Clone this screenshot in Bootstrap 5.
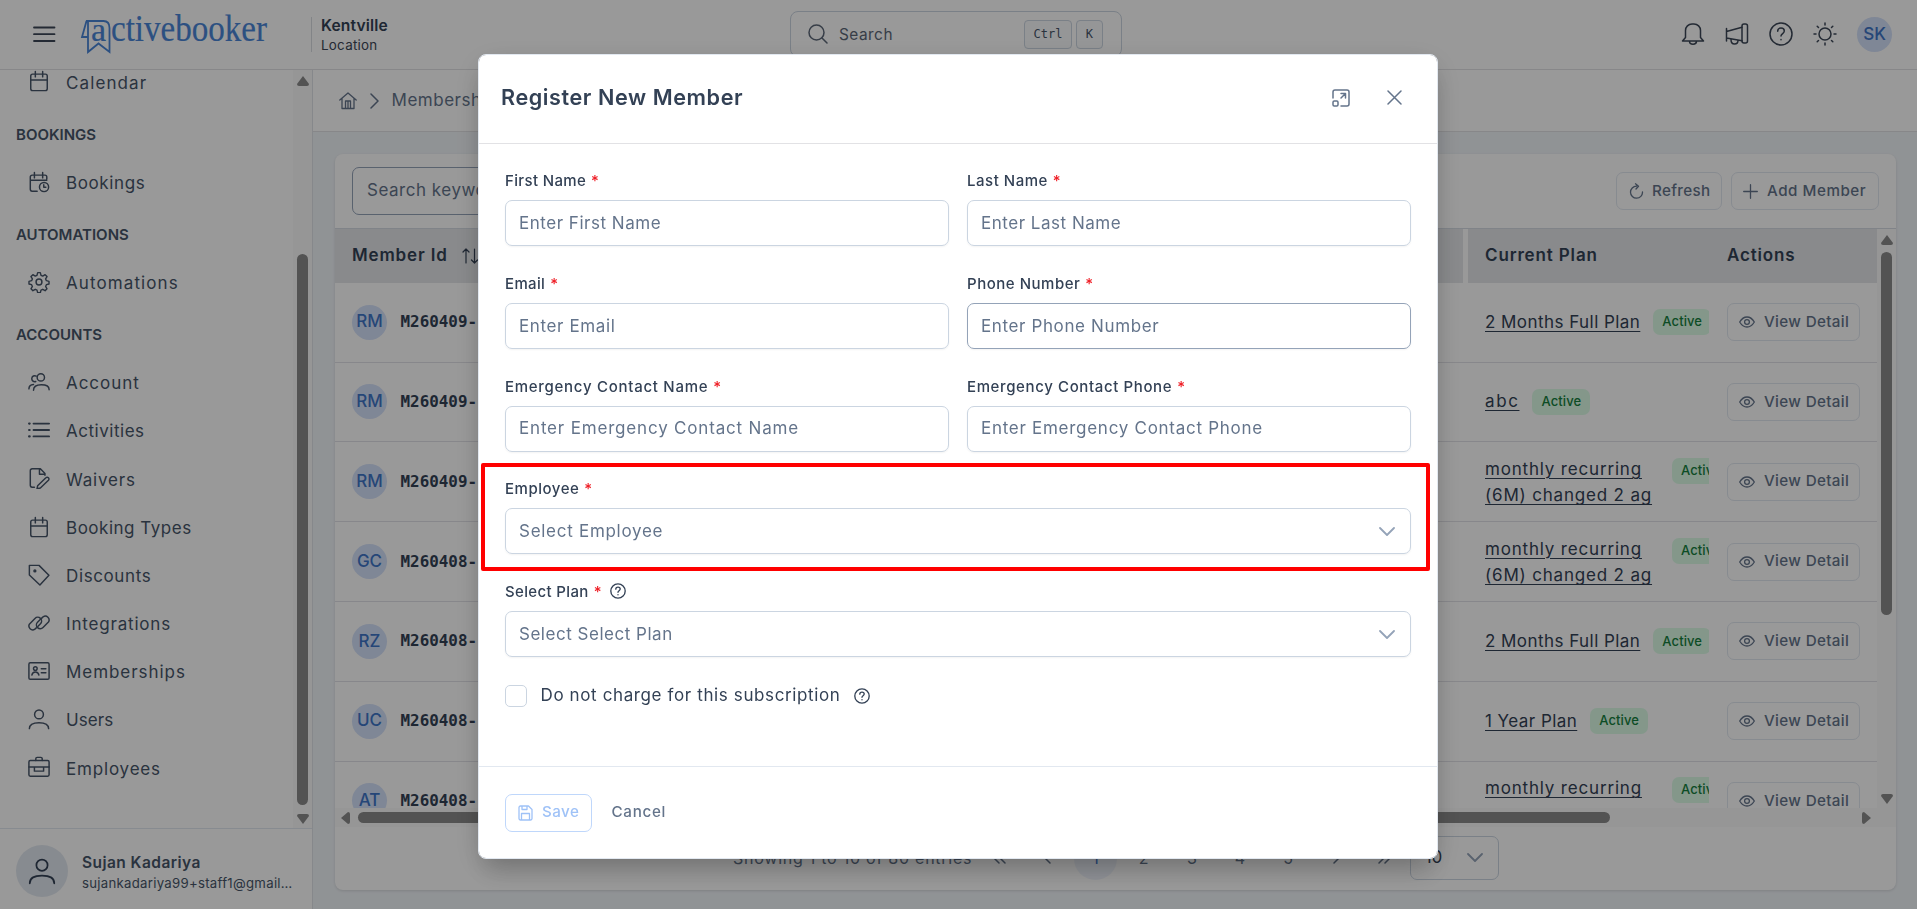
<!DOCTYPE html>
<html lang="en">
<head>
<meta charset="utf-8">
<meta name="viewport" content="width=device-width, initial-scale=1">
<title>Members</title>
<link href="https://cdn.jsdelivr.net/npm/bootstrap@5.3.0/dist/css/bootstrap.min.css" rel="stylesheet">
<style>
body{font-family:Inter,"Noto Sans",sans-serif;font-size:17px;color:#475569;background:#f1f5f9;height:909px;overflow:hidden;line-height:1.5;--bs-border-color:#e2e8f0}
svg.ic{fill:none;stroke:currentColor;stroke-width:1.5;stroke-linecap:round;stroke-linejoin:round;flex:none;display:block}
.ls1{letter-spacing:.1px!important}.ls3{letter-spacing:.35px!important}.ls5{letter-spacing:.52px!important}.ls6{letter-spacing:.62px!important}.ls7{letter-spacing:.72px!important}.ls8{letter-spacing:.82px!important}.ls9{letter-spacing:.95px!important}.ls11{letter-spacing:1.1px!important}.ls15{letter-spacing:1.6px!important}
.app{height:909px}
.top-bar{height:70px;border-bottom:1px solid #e2e2e5;background:#fff;padding:0 25px 0 33px;color:#3c4757}
.brand{margin-left:25px;overflow:visible}
.loc{margin-left:44px;border-left:1px solid #d9dde2;height:35px;padding-left:9px;line-height:1}
.loc b{font-size:15.6px;font-weight:600;color:#334155;letter-spacing:.15px;margin-top:1px;display:block}
.loc span{font-size:13.4px;letter-spacing:.25px;display:block;margin-top:5px}
.quick{width:332px;height:46px;border:1px solid #cbd5e1;border-radius:8px;margin-left:402px;margin-top:-1px;padding:0 18px 0 17px;font-size:15.4px;color:#5d6878}
.quick-text{margin-left:11px;letter-spacing:.5px;padding-top:1px}
.key{font-family:"DejaVu Sans Mono",monospace;font-size:12px;border:1px solid #cbd5e1;border-radius:4px;background:#f8fafc;height:29px;display:flex;align-items:center;justify-content:center;color:#475569}
.key.wide{width:48px}.key.slim{width:27px}
.top-icons{gap:20px;margin-top:-2px}
.round-av{width:35px;height:35px;border-radius:50%;background:#d4e1fa;color:#3f76c8;font-weight:500;font-size:17px;display:flex;align-items:center;justify-content:center;flex:none}
.top-icons .round-av{margin-top:2px}
.side{width:313px;border-right:1px solid #dfe3e8;background:#fff}
.side-scroll{height:758px;overflow:hidden}
.menu-list{margin-top:-10.8px;width:293px;flex:none}
.menu-item{height:48.17px;padding-left:28px;font-size:17px;color:#475569}
.menu-item .ic{width:22px;height:22px;margin-right:16px;margin-top:-4px;color:#475569;stroke-width:1.6}
.menu-head{height:52.1px;padding:3px 0 0 16px;font-size:15px;font-weight:600;color:#475569}
.vbar{width:19px;background:#fbfbfb;padding:6px 0 4px}
.vbar i,.hbar i{background:#8a8a8a;border-radius:6px;display:block}
.vbar i{width:11px}
.side .vbar i{height:551px;margin-top:168px}
.grid-box .vbar i{height:363px;margin-top:7px}
.tri{fill:#8a8a8a;flex:none;display:block}
.who{height:81px;border-top:1px solid #e2e8f0;padding:4px 0 0 16px}
.who .pic{width:52px;height:52px;border-radius:50%;background:#e2e8f0;color:#334155}
.who-text{margin-left:14px;padding-top:4px}
.who b{font-size:15.5px;font-weight:600;line-height:20px;display:block;color:#475569;letter-spacing:.45px}
.who span{font-size:13.2px;line-height:20px;display:block;color:#475569}
.who-text span{letter-spacing:.28px}
.crumbs{height:62px;border-bottom:1px solid #e2e2e5;background:#fff;padding-left:26px;color:#64748b;font-size:17px}
.crumbs .sep{margin:0 12.500px 0 13px}
.panel{margin:22px 21px 0 22px;height:736px;border-radius:8px;background:#fff;box-shadow:0 1px 3px rgba(0,0,0,.12)}
.tools{height:74px;padding:0 17px}
.kw{width:300px;height:48px;border:1px solid #94a3b8;border-radius:7px;padding-left:14px;font-size:17px;color:#64748b}
.ghost{height:38px;border:1px solid #e2e8f0;border-radius:7px;color:#64748b;font-size:15.2px;font-weight:500;display:flex;align-items:center;padding:0 0 0 11px;background:#fff}
.ghost .ic{margin-right:9px;stroke-width:1.3}
.b-refresh{width:106px;margin-right:9px}.b-add{width:148px}.b-view{width:133px}
.b-refresh .ic{margin-left:1px;margin-right:8px}
.grid-box{height:580px;border-top:1px solid #d5dbe3}
.rows-area{height:579px;overflow:hidden}
.line{display:flex;height:79.8px;border-bottom:1px solid #e2e2e8}
.line.hd{height:53.8px;border:0;font-weight:600;font-size:17px;color:#334155;letter-spacing:.85px}
.hd>div{background:#e4e6e9}
.line .c1{width:1133px;flex:none;padding-left:17px}
.line .c2{width:241px;flex:none;padding-left:17px;overflow:hidden}
.line .c3{width:168px;flex:none;padding-left:18px}
.hd .c1{border-right:5px solid #fff}
.hd .sort{margin-left:14px;stroke-width:1.2}
.mid{font-family:"DejaVu Sans Mono",monospace;font-weight:700;font-size:15.9px;color:#334155;margin-left:13.500px}
.plan{color:#334155;text-decoration:underline;text-underline-offset:3px;text-decoration-thickness:1px;line-height:27px;letter-spacing:.45px;white-space:nowrap}
.plan.two{width:187px;flex:none;line-height:26.5px;letter-spacing:.82px}
.pt-two{padding-top:13.500px}
.state{background:#dcfce7;color:#15803d;font-weight:500;font-size:13px;height:26px;border-radius:7px;padding:0 9px;display:flex;align-items:center;margin-left:13px;flex:none;letter-spacing:.1px}
.two+.state{margin-left:0;margin-top:2px}
.hbar{height:19px;background:#fbfbfb;padding:0 6px}
.hbar i{height:11px;width:1252px;margin-left:8px}
.hbar .end{margin-right:19px}
.pages{font-size:16px;height:62px;color:#64748b}
.showing{margin-left:398px;width:242px;letter-spacing:.75px}
.pg{width:48.2px;display:flex;justify-content:center;align-items:center}
.pg.on span{width:43px;height:43px;border-radius:50%;background:#eff3fb;color:#3f76c8;display:flex;align-items:center;justify-content:center}
.count-sel{width:89px;height:44px;border:1px solid #cbd5e1;border-radius:7px;color:#334155;padding:0 15px 0 14px;font-size:17px;margin-left:1px}
.arrow{color:#94a3b8}
.shade{position:fixed;inset:0;background:rgba(0,0,0,.4)}
.modal{padding-right:1px}
.modal-dialog{width:960px;max-width:960px;margin:54px auto 0}
.modal-content{height:805px;border:1px solid #e2e8f0;border-radius:8px;box-shadow:0 20px 25px -5px rgba(0,0,0,.1),0 8px 30px -6px rgba(0,0,0,.25);color:#475569}
.modal-header{height:89px;border-bottom:1px solid #e2e2e5;padding:0 35px 3px 22px;color:#64748b}
.modal-header .d-flex{gap:37px}
.modal-title{font-size:21.6px;font-weight:600;color:#334155;letter-spacing:.58px;line-height:1.1}
.modal-body{padding:24px 26px 0}
.cell{height:102.8px}
.cell label{height:25px;font-size:15px;font-weight:500;color:#334155;display:flex;align-items:center;margin-bottom:7px;line-height:25px}
.cell label em{color:#ef1c24;font-style:normal;margin-left:5px;letter-spacing:0}
.cell label .ic{margin-left:9px;margin-top:-1px}
.inp{height:46px;border:1px solid #cbd5e1;border-radius:7px;padding:1px 15px 0 13px;display:flex;align-items:center;justify-content:space-between;color:#64748b;font-size:17px;box-shadow:0 1px 2px rgba(18,18,23,.05)}
.inp.hov{border-color:#94a3b8}
.g18{--bs-gutter-x:18px}
.hilite{position:absolute;left:2px;top:408px;width:948.500px;height:107.500px;border:4px solid #f00;border-radius:2px}
.nocharge{margin-top:1px;color:#334155;gap:13.500px}
.tick{width:22px;height:22px;border:1px solid #cbd5e1;border-radius:5px}
.modal-footer{height:92px;border-top:1px solid #e2e8f0;padding:0 26px;justify-content:flex-start}
.modal-footer>*{margin:0}
.save{width:86.500px;border-color:#bfd7fb;color:#9fc2f7;letter-spacing:.45px}
.save .ic{margin-left:1px}
.cancel{margin-left:20px;font-size:15.2px;font-weight:500;color:#64748b;letter-spacing:.7px}
</style>
</head>
<body>
<svg width="0" height="0" class="position-absolute">
<defs>
<symbol id="cal" viewBox="0 0 24 24"><rect x="3" y="4.5" width="18" height="18" rx="2"/><path d="M3 11h18M8 1.5v6M16 1.5v6"/></symbol>
<symbol id="calclock" viewBox="0 0 24 24"><path d="M10 22H4.500a2 2 0 0 1-2-2V6.500a2 2 0 0 1 2-2h14a2 2 0 0 1 2 2V9M2.500 10h18M7 1.500v6M16 1.500v6"/><circle cx="17.500" cy="17.500" r="5"/><path d="M17.200 15v2.800h2.300"/></symbol>
<symbol id="gear" viewBox="0 0 24 24"><circle cx="12" cy="12" r="3.200"/><path d="M10.500 1.500h3l.8 3 2 .9 2.700-1.600 2.200 2.200-1.600 2.700.9 2 3 .8v3l-3 .8-.9 2 1.600 2.700-2.200 2.200-2.700-1.600-2 .9-.8 3h-3l-.8-3-2-.9L5 22.200 2.800 20l1.600-2.700-.9-2-3-.8v-3l3-.8.9-2L2.800 6 5 3.800l2.700 1.600 2-.9z" transform="translate(.6 .4) scale(.95)"/></symbol>
<symbol id="group" viewBox="0 0 24 24"><circle cx="14" cy="7" r="4"/><path d="M6 21c0-4 3-6 8.500-6s8.500 2 8.500 5v.5M9 5.500A3.300 3.300 0 1 0 8.500 11.500M1 19.500c0-3 1.500-4.500 5-4.800"/></symbol>
<symbol id="list" viewBox="0 0 24 24"><path d="M6 5h17M6 12h17M6 19h17" stroke-width="2"/><path d="M1.200 5h.6M1.200 12h.6M1.200 19h.6" stroke-width="2.400"/></symbol>
<symbol id="waiver" viewBox="0 0 24 24"><path d="M7 22H4.500a2 2 0 0 1-2-2V4a2 2 0 0 1 2-2h9L18.500 7v2M12.500 2.500v5.500h6"/><path d="M10.500 20.500 19.500 11.800a1.900 1.900 0 0 1 2.800 2.700L13.500 23l-3.700.8z"/></symbol>
<symbol id="tag" viewBox="0 0 24 24"><path d="M1.500 1.500h10.500L22.800 12.300 13 23 1.500 12z"/><circle cx="7.500" cy="7.500" r="1"/></symbol>
<symbol id="chain" viewBox="0 0 24 24"><path d="M9 17.300 7.500 18.800A4.200 4.200 0 0 1 1.700 13L7.600 7a4.200 4.200 0 0 1 6 5.900l-2.400 2.500M15 6.700 16.500 5.200A4.200 4.200 0 0 1 22.300 11L16.400 17a4.200 4.200 0 0 1-6-5.900l2.400-2.500"/></symbol>
<symbol id="idc" viewBox="0 0 24 24"><rect x="1" y="3" width="22" height="18" rx="1.500"/><circle cx="8" cy="9.300" r="2"/><path d="M4.200 16.500c.4-2.500 1.600-3.500 3.800-3.500s3.500 1 3.900 3.500M14.500 9.500h5M14.500 14h5"/></symbol>
<symbol id="usr" viewBox="0 0 24 24"><circle cx="12" cy="7" r="4.800"/><path d="M1.500 22.500c0-4.500 4-6.500 10.500-6.500s10.500 2 10.500 6.500"/></symbol>
<symbol id="case" viewBox="0 0 24 24"><rect x="1" y="5" width="22" height="17" rx="1.500"/><path d="M8.500 5V3a1.500 1.500 0 0 1 1.500-1.500h4A1.500 1.500 0 0 1 15.500 3v2M1 12h22M7 12v4.500h10V12"/></symbol>
<symbol id="q" viewBox="0 0 24 24"><circle cx="12" cy="12" r="11"/><path d="M8.700 9.300c0-2 1.400-3.200 3.300-3.200s3.300 1.200 3.300 3c0 2.400-3.300 2.500-3.300 4.900M12 17.400v.3"/></symbol>
<symbol id="q2" viewBox="0 0 24 24" stroke-width="2"><circle cx="12" cy="12" r="10.800"/><path d="M8.700 9.300c0-2 1.400-3.200 3.300-3.200s3.300 1.200 3.300 3c0 2.400-3.300 2.500-3.300 4.900M12 17.400v.3"/></symbol>
<symbol id="dn" viewBox="0 0 16 10"><path d="M1 1l7 7 7-7" stroke-width="1.800"/></symbol>
<symbol id="eye" viewBox="0 0 24 18" stroke-width="1.900"><path d="M1 9c3-5 6.500-7.500 11-7.500S20 4 23 9c-3 5-6.500 7.500-11 7.500S4 14 1 9z"/><circle cx="12" cy="9" r="3.600"/></symbol>
</defs></svg>

<div class="app d-flex flex-column">
<header class="top-bar d-flex align-items-center">
  <svg class="ic" width="23" height="18" viewBox="0 0 23 18"><path stroke-width="1.800" d="M1 1.500h20.500M1 8.200h20.500M1 15h20.500"/></svg>
  <svg class="brand" width="186" height="46" viewBox="0 0 186 46">
    <path d="M5 9h17.500q6 0 6 7v24l-11-8.500L7 40V9M5.500 9 1 25h5.500" fill="none" stroke="#4a86d8" stroke-width="1.800"/>
    <g fill="#4a86d8" stroke="#4a86d8" stroke-width=".2" font-family="Liberation Serif, serif"><text x="10" y="29" font-size="34">a</text><text x="30" y="29" font-size="37" textLength="156" lengthAdjust="spacingAndGlyphs">ctivebooker</text></g>
  </svg>
  <div class="loc"><b>Kentville</b><span>Location</span></div>
  <div class="quick d-flex align-items-center">
    <svg class="ic" width="20" height="20" viewBox="0 0 20 20"><circle cx="8.500" cy="8.500" r="7.500"/><path d="M14 14l5 5"/></svg>
    <span class="quick-text me-auto">Search</span>
    <span class="key wide">Ctrl</span><span class="key slim ms-1">K</span>
  </div>
  <div class="top-icons d-flex align-items-center ms-auto">
    <svg class="ic" width="24" height="24" viewBox="0 0 24 24"><path d="M1.500 19h21l-3-3.500V8.500A6.500 6.500 0 0 0 13 2h-2a6.500 6.500 0 0 0-6.500 6.500v7zM8.500 19.300a3.500 3 0 0 0 7 0"/></svg>
    <svg class="ic" width="24" height="24" viewBox="0 0 24 24"><rect x="17" y="2" width="5.500" height="19" rx="2"/><path d="M17 5.200 1.500 9.500v6.500L17 18.800M1.500 6.500v12.500M6 17.500c0 3.300 1.500 4.500 3.500 4.500s3.500-1.300 3.500-3.500"/></svg>
    <svg class="ic" width="24" height="24"><use href="#q"/></svg>
    <svg class="ic" width="24" height="24" viewBox="0 0 24 24"><circle cx="12" cy="12" r="6"/><path d="M12 1v2M12 21v2M1 12h2M21 12h2M4.200 4.200l1.300 1.300M18.500 18.500l1.300 1.300M4.200 19.800l1.300-1.300M18.500 5.500l1.300-1.300"/></svg>
    <span class="round-av">SK</span>
  </div>
</header>
<div class="d-flex flex-grow-1">
<aside class="side flex-shrink-0">
  <div class="side-scroll d-flex">
    <nav class="menu-list">
      <div class="menu-item ls11 d-flex align-items-center"><svg class="ic"><use href="#cal"/></svg>Calendar</div>
      <div class="menu-head d-flex align-items-center">BOOKINGS</div>
      <div class="menu-item ls6 d-flex align-items-center"><svg class="ic"><use href="#calclock"/></svg>Bookings</div>
      <div class="menu-head d-flex align-items-center">AUTOMATIONS</div>
      <div class="menu-item ls11 d-flex align-items-center"><svg class="ic"><use href="#gear"/></svg>Automations</div>
      <div class="menu-head d-flex align-items-center">ACCOUNTS</div>
      <div class="menu-item ls9 d-flex align-items-center"><svg class="ic"><use href="#group"/></svg>Account</div>
      <div class="menu-item ls5 d-flex align-items-center"><svg class="ic"><use href="#list"/></svg>Activities</div>
      <div class="menu-item ls8 d-flex align-items-center"><svg class="ic"><use href="#waiver"/></svg>Waivers</div>
      <div class="menu-item ls5 d-flex align-items-center"><svg class="ic"><use href="#cal"/></svg>Booking Types</div>
      <div class="menu-item ls6 d-flex align-items-center"><svg class="ic"><use href="#tag"/></svg>Discounts</div>
      <div class="menu-item ls8 d-flex align-items-center"><svg class="ic"><use href="#chain"/></svg>Integrations</div>
      <div class="menu-item ls9 d-flex align-items-center"><svg class="ic"><use href="#idc"/></svg>Memberships</div>
      <div class="menu-item ls1 d-flex align-items-center"><svg class="ic"><use href="#usr"/></svg>Users</div>
      <div class="menu-item ls8 d-flex align-items-center"><svg class="ic"><use href="#case"/></svg>Employees</div>
    </nav>
    <div class="vbar d-flex flex-column align-items-center">
      <svg class="tri" width="12" height="10"><path d="M6 0 12 8q0 2-2 2H2Q0 10 0 8z"/></svg>
      <i></i>
      <svg class="tri mt-auto" width="12" height="10"><path d="M6 10 12 2q0-2-2-2H2Q0 0 0 2z"/></svg>
    </div>
  </div>
  <div class="who d-flex align-items-center"><span class="pic d-flex align-items-center justify-content-center"><svg class="ic" width="28" height="28"><use href="#usr"/></svg></span><div class="who-text"><b>Sujan Kadariya</b><span>sujankadariya99+staff1@gmail…</span></div></div>
</aside>
<main class="flex-grow-1">
  <div class="crumbs ls5 d-flex align-items-center">
    <svg class="ic" width="18" height="18" viewBox="0 0 18 18"><path stroke-width="1.300" d="M.8 8 9 1l8.200 7M3 6.500V16.500h12V6.500M6.500 16.500V9h5v7.500M9 9v7.500"/></svg>
    <svg class="ic sep" width="9" height="16" viewBox="0 0 9 16"><path d="M1 1l7 7-7 7"/></svg>Memberships
  </div>
  <section class="panel">
    <div class="tools d-flex align-items-center">
      <div class="kw ls5 d-flex align-items-center">Search keyword</div>
      <div class="ghost b-refresh ls3 ms-auto"><svg class="ic" width="15" height="16" viewBox="0 0 15 16"><path d="M7.500 3.200A6 6 0 1 0 13.500 9M6.500.8 9.500 3.200 7 6"/></svg>Refresh</div>
      <div class="ghost b-add ls5"><svg class="ic" width="15" height="15" viewBox="0 0 15 15"><path d="M7.500.7v13.600M.7 7.500h13.600"/></svg>Add Member</div>
    </div>
    <div class="grid-box d-flex">
      <div class="rows-area">
        <div class="line hd"><div class="c1 d-flex align-items-center">Member Id<svg class="ic sort" width="17" height="16" viewBox="0 0 17 16"><path d="M4 15V1M1 4l3-3 3 3M12.500 1v14M9.500 12l3 3 3-3"/></svg></div><div class="c2 d-flex align-items-center">Current Plan</div><div class="c3 d-flex align-items-center">Actions</div></div>
        <div id="rows"></div>
      </div>
      <div class="vbar d-flex flex-column align-items-center">
        <svg class="tri" width="12" height="10"><path d="M6 0 12 8q0 2-2 2H2Q0 10 0 8z"/></svg>
        <i></i>
        <svg class="tri mt-auto" width="12" height="10"><path d="M6 10 12 2q0-2-2-2H2Q0 0 0 2z"/></svg>
      </div>
    </div>
    <div class="hbar d-flex align-items-center">
      <svg class="tri" width="9" height="12"><path d="M0 6 7 0q2 0 2 2v8q0 2-2 2z"/></svg><i></i>
      <svg class="tri end ms-auto" width="9" height="12"><path d="M9 6 2 0Q0 0 0 2v8q0 2 2 2z"/></svg>
    </div>
    <div class="pages d-flex align-items-center">
      <span class="showing text-nowrap">Showing 1 to 10 of 80 entries</span>
      <span class="pg"><svg class="ic" width="13" height="12" viewBox="0 0 13 12"><path d="M6 1 1 6l5 5M12 1 7 6l5 5"/></svg></span>
      <span class="pg"><svg class="ic" width="7" height="12" viewBox="0 0 7 12"><path d="M6 1 1 6l5 5"/></svg></span>
      <span class="pg on"><span>1</span></span><span class="pg">2</span><span class="pg">3</span><span class="pg">4</span><span class="pg">5</span>
      <span class="pg"><svg class="ic" width="7" height="12" viewBox="0 0 7 12"><path d="M1 1l5 5-5 5"/></svg></span>
      <span class="pg"><svg class="ic" width="13" height="12" viewBox="0 0 13 12"><path d="M1 1l5 5-5 5M7 1l5 5-5 5"/></svg></span>
      <div class="count-sel d-flex align-items-center justify-content-between">10<svg class="ic arrow" width="16" height="10"><use href="#dn"/></svg></div>
    </div>
  </section>
</main>
</div>
</div>

<div class="shade"></div>
<div class="modal d-block"><div class="modal-dialog"><div class="modal-content">
  <div class="modal-header d-flex align-items-center">
    <h5 class="modal-title">Register New Member</h5>
    <div class="d-flex align-items-center">
      <svg class="ic" width="18" height="18" viewBox="0 0 18 18"><path d="M1 9V3a2 2 0 0 1 2-2h12a2 2 0 0 1 2 2v12a2 2 0 0 1-2 2H9M9 9l4.500-4.500M9 4.500h4.500V9"/><rect x="1" y="12" width="5" height="5" rx="1.200"/></svg>
      <svg class="ic" width="15" height="15" viewBox="0 0 15 15"><path d="M1 1l13 13M14 1 1 14"/></svg>
    </div>
  </div>
  <div class="modal-body">
    <div class="row g18">
      <div class="col-6 cell"><label class="ls3">First Name <em>*</em></label><div class="inp ls5">Enter First Name</div></div>
      <div class="col-6 cell"><label class="ls5">Last Name <em>*</em></label><div class="inp ls5">Enter Last Name</div></div>
      <div class="col-6 cell"><label class="ls3">Email <em>*</em></label><div class="inp ls6">Enter Email</div></div>
      <div class="col-6 cell"><label class="ls5">Phone Number <em>*</em></label><div class="inp hov ls6">Enter Phone Number</div></div>
      <div class="col-6 cell"><label class="ls7">Emergency Contact Name <em>*</em></label><div class="inp ls8">Enter Emergency Contact Name</div></div>
      <div class="col-6 cell"><label class="ls6">Emergency Contact Phone <em>*</em></label><div class="inp ls7">Enter Emergency Contact Phone</div></div>
      <div class="col-12 cell"><label class="ls5">Employee <em>*</em></label><div class="inp ls7">Select Employee<svg class="ic arrow" width="16" height="10"><use href="#dn"/></svg></div></div>
      <div class="col-12 cell"><label class="ls3">Select Plan <em>*</em><svg class="ic" width="16" height="16"><use href="#q2"/></svg></label><div class="inp ls5">Select Select Plan<svg class="ic arrow" width="16" height="10"><use href="#dn"/></svg></div></div>
    </div>
    <div class="nocharge d-flex align-items-center"><span class="tick"></span><span class="ls6">Do not charge for this subscription</span><svg class="ic" width="16" height="16"><use href="#q2"/></svg></div>
  </div>
  <div class="modal-footer d-flex mt-auto"><span class="ghost save"><svg class="ic" width="15" height="16" viewBox="0 0 15 16"><path d="M2.500 1h8L14 4.500v9a1.500 1.500 0 0 1-1.500 1.500h-10A1.500 1.500 0 0 1 1 13.500v-11A1.500 1.500 0 0 1 2.500 1zM4 1v3.500h5V1M3.500 15V8.500h8V15"/></svg>Save</span><span class="cancel">Cancel</span></div>
  <div class="hilite"></div>
</div></div></div>

<script src="https://cdn.jsdelivr.net/npm/bootstrap@5.3.0/dist/js/bootstrap.bundle.min.js"></script>
<script>
const long='monthly recurring<br>(6M) changed 2 ag';
const members=[['RM','M260409-','2 Months Full Plan'],['RM','M260409-','abc'],['RM','M260409-',long],['GC','M260408-',long],['RZ','M260408-','2 Months Full Plan'],['UC','M260408-','1 Year Plan'],['AT','M260408-',long]];
document.getElementById('rows').innerHTML=members.map(([a,id,p])=>`<div class="line"><div class="c1 d-flex align-items-center"><span class="round-av">${a}</span><span class="mid">${id}</span></div><div class="c2 d-flex ${p===long?'align-items-start pt-two':'align-items-center'}"><span class="plan ${p===long?'two':p==='abc'?'ls15':''}">${p}</span><span class="state">Active</span></div><div class="c3 d-flex align-items-center"><span class="ghost b-view ls3"><svg class="ic" width="16" height="12"><use href="#eye"/></svg>View Detail</span></div></div>`).join('');
</script>
</body>
</html>
